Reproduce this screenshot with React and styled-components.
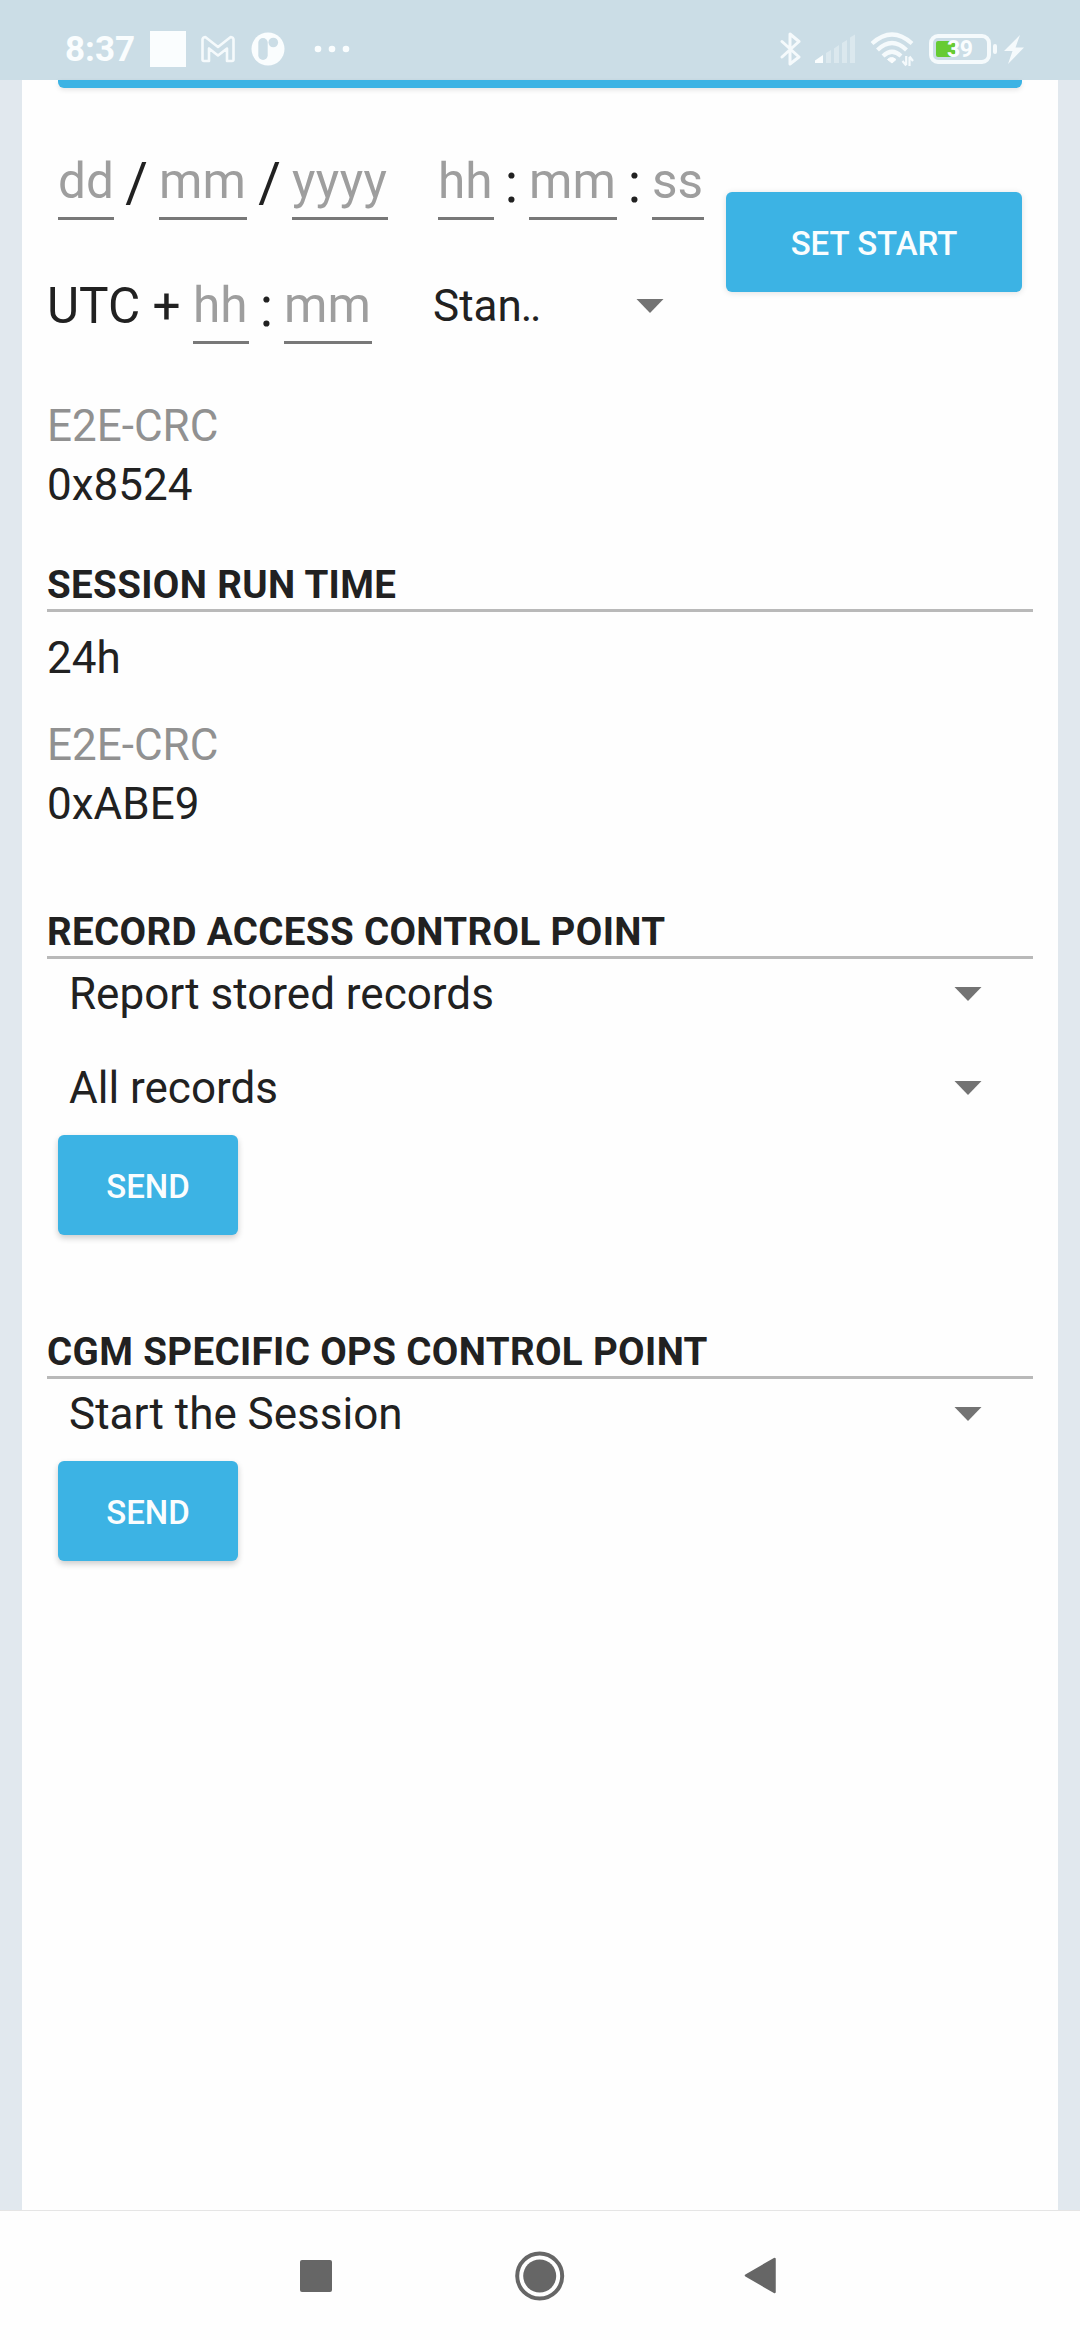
import React from "react";
import styled, { createGlobalStyle } from "styled-components";

const GlobalStyle = createGlobalStyle`
  * { box-sizing: border-box; }
  body {
    margin: 0;
    background: #fefefe;
    font-family: Roboto, "Noto Sans", sans-serif;
    color: #212121;
  }
`;

const Screen = styled.div`
  width: 1080px;
  height: 2340px;
  display: flex;
  flex-direction: column;
  overflow: hidden;
`;

const StatusBar = styled.header`
  height: 80px;
  flex: none;
  display: flex;
  align-items: center;
  justify-content: space-between;
  padding: 18px 56px 0 65px;
  background: #cbdde6;
`;

const StatusGroup = styled.div`
  display: flex;
  align-items: center;
  height: 62px;
`;

const Clock = styled.span`
  width: 85px;
  font-size: 35px;
  line-height: 40px;
  font-weight: 700;
  color: #fafdfe;
  padding-top: 1px;
`;

const AppSquare = styled.span`
  width: 36px;
  height: 36px;
  background: #fafdfe;
`;

const Icon = styled.svg`
  display: block;
  flex: none;
  margin-left: ${(p) => p.$gap || 0}px;
`;

const Battery = styled.div`
  width: 62px;
  height: 30px;
  margin-left: 15px;
  border: 4px solid #f5fafc;
  border-radius: 9px;
  padding: 3px;
  display: flex;
  align-items: center;
`;

const BatteryFill = styled.div`
  width: 19px;
  height: 16px;
  flex: none;
  border-radius: 2px;
  background: #66cb33;
`;

const BatteryLevel = styled.span`
  margin-left: -8px;
  padding-top: 2px;
  font-size: 23px;
  line-height: 26px;
  font-weight: 700;
  letter-spacing: -0.5px;
  color: #fafdfe;
`;

const BatteryTip = styled.div`
  width: 4px;
  height: 10px;
  margin-left: 2px;
  border-radius: 2px;
  background: #f5fafc;
`;

const Body = styled.div`
  flex: 1;
  min-height: 0;
  padding: 0 22px;
  background: #e1e8ee;
`;

const Page = styled.main`
  height: 100%;
  background: #fefefe;
  padding: 0 25px;
  display: flex;
  flex-direction: column;
`;

const CutButton = styled.div`
  height: 8px;
  flex: none;
  margin: 0 11px;
  border-radius: 0 0 6px 6px;
  background: #3cb3e4;
  box-shadow: 0 2px 5px rgba(0, 0, 0, 0.1);
`;

const DateBlock = styled.section`
  display: flex;
  justify-content: space-between;
  align-items: flex-start;
  margin-top: 63px;
  padding-right: 11px;
`;

const DateRows = styled.div`
  display: flex;
  flex-direction: column;
  gap: 55px;
`;

const FieldRow = styled.div`
  display: flex;
  align-items: flex-start;
  height: 69px;
  padding-left: ${(p) => p.$indent || 0}px;
`;

const DateField = styled.span`
  width: ${(p) => p.$w}px;
  height: 68px;
  margin: 1px 0 0 ${(p) => p.$gap || 0}px;
  border-bottom: 3px solid #787878;
  font-size: 49.5px;
  line-height: 58px;
  letter-spacing: ${(p) => p.$track || 0}px;
  color: #9e9e9e;
  white-space: nowrap;
`;

const Separator = styled.span`
  width: ${(p) => p.$w}px;
  display: flex;
  justify-content: center;
  font-size: 55px;
  line-height: 64px;
`;

const UtcLabel = styled.span`
  width: 146px;
  padding-top: 2px;
  font-size: 49.5px;
  line-height: 58px;
  white-space: pre;
`;

const SmallSpinner = styled.div`
  display: flex;
  justify-content: space-between;
  align-items: center;
  width: 231px;
  height: 62px;
  margin-left: 61px;
  font-size: 44px;
  line-height: 52px;
`;

const Dots = styled.span`
  margin-left: -1px;
  letter-spacing: -2.4px;
`;

const Button = styled.button`
  display: block;
  width: ${(p) => p.$w}px;
  height: 100px;
  margin: ${(p) => p.$m};
  padding: 3px 0 0;
  flex: none;
  border: 0;
  border-radius: 6px;
  background: #3cb3e4;
  box-shadow: 0 ${(p) => p.$lift || 3}px 6px rgba(0, 0, 0, ${(p) => (p.$lift ? 0.12 : 0.2)});
  color: #fafdfe;
  font-family: inherit;
  font-size: 33px;
  font-weight: 500;
  text-align: center;
`;

const Section = styled.section`
  display: flex;
  flex-direction: column;
  margin-top: ${(p) => p.$top}px;
`;

const Label = styled.div`
  font-size: 44px;
  line-height: 58px;
  color: #919191;
`;

const Value = styled.div`
  font-size: 44px;
  line-height: ${(p) => p.$lh || 60}px;
  margin-bottom: ${(p) => p.$after || 0}px;
`;

const Heading = styled.h2`
  margin: 0;
  height: 50px;
  border-bottom: 3px solid #b9b9b9;
  font-size: 38.5px;
  line-height: 45px;
  font-weight: 700;
  letter-spacing: 0.36px;
  margin-bottom: ${(p) => p.$after || 0}px;
`;

const Spinner = styled.div`
  display: flex;
  justify-content: space-between;
  align-items: center;
  height: 70px;
  padding: 0 51px 0 22px;
  margin-bottom: ${(p) => p.$after || 0}px;
  font-size: 44px;
  line-height: 52px;
`;

const NavBar = styled.nav`
  flex: none;
  height: 130px;
  border-top: 1px solid #e5e5e5;
  background: #fefefe;
  display: flex;
  align-items: center;
  padding-left: 300px;
`;

const Caret = () => (
  <Icon width="28" height="16" viewBox="0 0 28 16">
    <path d="M.5 1h27L14 15z" fill="#737373" />
  </Icon>
);

export default function App() {
  return (
    <Screen>
      <GlobalStyle />
      <StatusBar>
        <StatusGroup>
          <Clock>8:37</Clock>
          <AppSquare />
          <Icon $gap={15} width="34" height="28" viewBox="0 0 34 28">
            <path
              d="M1.5 24.500V4.500Q1.500 2.500 4.300 2L17 12 29.700 2Q32.500 2.500 32.500 4.500V24.500Q32.500 26 31 26H26V13.500L17 20.500 8 13.500V26H3Q1.500 26 1.500 24.500Z"
              fill="none"
              stroke="#f5fafc"
              strokeWidth="2.6"
              strokeLinejoin="round"
            />
          </Icon>
          <Icon $gap={16} width="34" height="34" viewBox="0 0 34 34">
            <circle cx="17" cy="17" r="16.500" fill="#fafdfe" />
            <rect x="7.300" y="6" width="9.400" height="22" rx="4.700" fill="#cbdde6" />
            <circle cx="22.300" cy="10.500" r="4.800" fill="#cbdde6" />
          </Icon>
          <Icon $gap={29} width="38" height="8" viewBox="0 0 38 8">
            <circle cx="4" cy="4" r="3.300" fill="#fafdfe" />
            <circle cx="18" cy="4" r="3.300" fill="#fafdfe" />
            <circle cx="32" cy="4" r="3.300" fill="#fafdfe" />
          </Icon>
        </StatusGroup>
        <StatusGroup>
          <Icon width="22" height="36" viewBox="0 0 22 36">
            <path
              d="M3 10.500 20 26 11 33V3L20 10.500 3 26"
              fill="none"
              stroke="#f5fafc"
              strokeWidth="3"
              strokeLinejoin="round"
              strokeLinecap="round"
            />
          </Icon>
          <Icon $gap={14} width="40" height="30" viewBox="0 0 40 30">
            <path d="M0 29V26.500L8 21V29Z" fill="#fafdfe" />
            <path
              d="M11 29V19L16 16V29ZM19 29V14.500L24 11V29ZM27 29V9L32 6V29ZM35 29V3.500L40 .5V29Z"
              fill="#dbe8ee"
            />
          </Icon>
          <Icon $gap={15} width="44" height="36" viewBox="0 0 44 36">
            <g fill="none" stroke="#f5fafc" strokeWidth="4.200">
              <path d="M2 12.500Q22 -5.500 42 12.500" />
              <path d="M7.500 19Q22 5 36.500 19" />
              <path d="M13 25Q22 16.500 31 25" />
            </g>
            <path d="M17.500 28.500Q21.500 24.500 26 28.500L22 32Z" fill="#fafdfe" stroke="#fafdfe" strokeWidth="1" />
            <path
              d="M36.200 25V34M36.200 34.500 32.500 30M39.500 35V26M39.500 25.500 43 30"
              fill="none"
              stroke="#f5fafc"
              strokeWidth="2.200"
            />
          </Icon>
          <Battery>
            <BatteryFill />
            <BatteryLevel>39</BatteryLevel>
          </Battery>
          <BatteryTip />
          <Icon $gap={7} width="20" height="29" viewBox="0 0 20 29">
            <path d="M16 0 0 16H8.500L4 29 20 12.500H11.500Z" fill="#f5fafc" />
          </Icon>
        </StatusGroup>
      </StatusBar>

      <Body>
        <Page>
          <CutButton />
          <DateBlock>
            <DateRows>
              <FieldRow $indent={11}>
                <DateField $w={56}>dd</DateField>
                <Separator $w={45}>/</Separator>
                <DateField $w={88}>mm</DateField>
                <Separator $w={45}>/</Separator>
                <DateField $w={96} $track={0.4}>yyyy</DateField>
                <DateField $w={56} $gap={50}>hh</DateField>
                <Separator $w={35}>:</Separator>
                <DateField $w={88}>mm</DateField>
                <Separator $w={35}>:</Separator>
                <DateField $w={52}>ss</DateField>
              </FieldRow>
              <FieldRow>
                <UtcLabel>UTC + </UtcLabel>
                <DateField $w={56}>hh</DateField>
                <Separator $w={35}>:</Separator>
                <DateField $w={88}>mm</DateField>
                <SmallSpinner>
                  <span>
                    Stan<Dots>..</Dots>
                  </span>
                  <Caret />
                </SmallSpinner>
              </FieldRow>
            </DateRows>
            <Button $w={296} $m="41px 0 0" $lift={1}>SET START</Button>
          </DateBlock>

          <Section $top={53}>
            <Label>E2E-CRC</Label>
            <Value>0x8524</Value>
          </Section>

          <Section $top={47}>
            <Heading $after={17}>SESSION RUN TIME</Heading>
            <Value $lh={58} $after={29}>24h</Value>
            <Label>E2E-CRC</Label>
            <Value>0xABE9</Value>
          </Section>

          <Section $top={75}>
            <Heading>RECORD ACCESS CONTROL POINT</Heading>
            <Spinner $after={24}>
              Report stored records
              <Caret />
            </Spinner>
            <Spinner>
              All records
              <Caret />
            </Spinner>
            <Button $w={180} $m="12px 0 0 11px">SEND</Button>
          </Section>

          <Section $top={94}>
            <Heading>CGM SPECIFIC OPS CONTROL POINT</Heading>
            <Spinner>
              Start the Session
              <Caret />
            </Spinner>
            <Button $w={180} $m="12px 0 0 11px">SEND</Button>
          </Section>
        </Page>
      </Body>

      <NavBar>
        <Icon width="32" height="32" viewBox="0 0 32 32">
          <rect width="32" height="32" rx="2" fill="#666" />
        </Icon>
        <Icon $gap={183} width="50" height="50" viewBox="0 0 50 50">
          <circle cx="24.700" cy="25" r="22.500" fill="none" stroke="#666" strokeWidth="4" />
          <circle cx="24.700" cy="25" r="16.500" fill="#666" />
        </Icon>
        <Icon $gap={179} width="32" height="37" viewBox="0 0 32 37">
          <path d="M2 18.500 30.500 2V35Z" fill="#666" stroke="#666" strokeWidth="2.500" strokeLinejoin="round" />
        </Icon>
      </NavBar>
    </Screen>
  );
}
